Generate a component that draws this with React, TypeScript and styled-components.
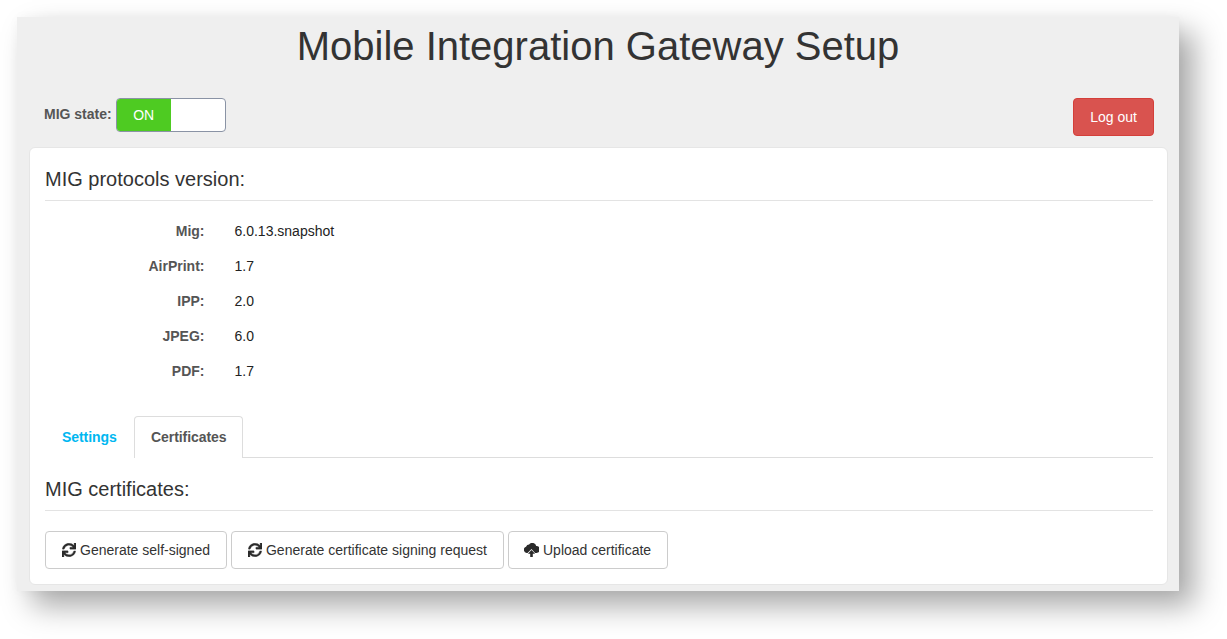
import React from "react";
import styled, { createGlobalStyle } from "styled-components";
import { FaSync } from "react-icons/fa";

const Global = createGlobalStyle`
  html, body { margin: 0; padding: 0; background: #fff; }
  body { font-family: "Liberation Sans", Arial, sans-serif; font-size: 14px; color: #333; overflow: hidden; }
`;

const Stage = styled.div`
  width: 1227px;
  height: 639px;
  box-sizing: border-box;
  padding: 17px 48px 48px 17px;
  overflow: hidden;
`;

const Window = styled.div`
  height: 574px;
  box-sizing: border-box;
  background: #efefef;
  padding: 0 11px 6px 12px;
  box-shadow: 15px 15px 28px rgba(0, 0, 0, 0.34), 0 0 10px rgba(0, 0, 0, 0.03);
  display: flex;
  flex-direction: column;
`;

const Title = styled.h1`
  margin: 0;
  height: 81px;
  padding: 5px 1px 0 0;
  box-sizing: border-box;
  text-align: center;
  font-size: 40px;
  line-height: 48px;
  font-weight: 400;
  color: #333;
`;

const TopBar = styled.div`
  height: 50px;
  box-sizing: border-box;
  padding: 1px 14px 0 15px;
  display: flex;
  justify-content: space-between;
  align-items: flex-start;
`;

const StateGroup = styled.div`
  display: flex;
  align-items: center;
  gap: 4px;
`;

const StateLabel = styled.span`
  font-weight: 700;
  font-size: 14px;
  color: #555;
  margin-top: -2px;
`;

const Toggle = styled.div`
  width: 110px;
  height: 34px;
  box-sizing: border-box;
  border: 1px solid #8a93a5;
  border-radius: 4px;
  background: #fff;
  overflow: hidden;
  display: flex;
`;

const ToggleOn = styled.div`
  width: 54px;
  background: #4ecb22;
  color: #fff;
  font-size: 14px;
  display: flex;
  align-items: center;
  justify-content: center;
`;

const LogoutButton = styled.button`
  width: 81px;
  height: 38px;
  box-sizing: border-box;
  border: 1px solid #d43f3a;
  border-radius: 4px;
  background: #d9534f;
  color: #fff;
  font: 14px "Liberation Sans", Arial, sans-serif;
  padding: 0;
`;

const Panel = styled.div`
  flex: 1;
  box-sizing: border-box;
  background: #fff;
  border: 1px solid #e6e6e6;
  border-radius: 6px;
  padding: 15px 14px 15px 15px;
  display: flex;
  flex-direction: column;
`;

const SectionTitle = styled.h3`
  margin: 0;
  font-size: 20px;
  line-height: 32px;
  height: 37px;
  font-weight: 400;
  color: #333;
  border-bottom: 1px solid #e3e3e3;
`;

const Versions = styled.dl`
  margin: 12px 0 0;
  display: grid;
  grid-template-columns: 159.5px 1fr;
  column-gap: 30px;
  grid-auto-rows: 35px;
  align-items: center;
`;

const VersionKey = styled.dt`
  font-weight: 700;
  color: #555;
  text-align: right;
`;

const VersionValue = styled.dd`
  margin: 0;
  color: #222;
`;

const Tabs = styled.div`
  margin-top: 28px;
  margin-bottom: 15px;
  height: 42px;
  box-sizing: border-box;
  display: flex;
  border-bottom: 1px solid #ddd;
`;

const Tab = styled.div<{ $active?: boolean }>`
  height: 42px;
  box-sizing: border-box;
  padding: 0 16px 2px;
  margin-right: 0.5px;
  display: flex;
  align-items: center;
  font-weight: 700;
  letter-spacing: -0.08px;
  color: ${(p) => (p.$active ? "#555" : "#00b7f1")};
  background: #fff;
  border: 1px solid ${(p) => (p.$active ? "#ddd" : "transparent")};
  border-bottom: 0;
  border-radius: 4px 4px 0 0;
`;

const Actions = styled.div`
  margin-top: 20px;
  display: flex;
  gap: 4px;
`;

const ActionButton = styled.button`
  height: 38px;
  box-sizing: border-box;
  padding: 0 16px;
  border: 1px solid #ccc;
  border-radius: 4px;
  background: #fff;
  color: #333;
  font: 14px "Liberation Sans", Arial, sans-serif;
  display: flex;
  align-items: center;
  gap: 4px;
`;

const RefreshIcon = styled(FaSync)`
  width: 14px;
  height: 14px;
  stroke: currentColor;
  stroke-width: 12px;
  color: #2a2a2a;
  margin-top: -1px;
`;

const CloudSvg = styled.svg`
  width: 15px;
  height: 14px;
  margin-left: -1px;
  fill: #2a2a2a;
`;

const CloudIcon = () => (
  <CloudSvg viewBox="1 1 13 13">
    <path d="M3.4 10.2H3a3 3 0 0 1-.6-5.8A3.3 3.3 0 0 1 5.3 2.4 3.7 3.7 0 0 1 11.9 3.8a3.2 3.2 0 0 1 .3 6.4h-1.4L7.5 6.6 3.8 10.2z" />
    <path d="M7.5 7.6 10.8 11H8.7v3H6.3v-3H4.2z" />
  </CloudSvg>
);

const versions: [string, string][] = [
  ["Mig:", "6.0.13.snapshot"],
  ["AirPrint:", "1.7"],
  ["IPP:", "2.0"],
  ["JPEG:", "6.0"],
  ["PDF:", "1.7"],
];

export default function App() {
  return (
    <>
      <Global />
      <Stage>
        <Window>
          <Title>Mobile Integration Gateway Setup</Title>
          <TopBar>
            <StateGroup>
              <StateLabel>MIG state:</StateLabel>
              <Toggle>
                <ToggleOn>ON</ToggleOn>
              </Toggle>
            </StateGroup>
            <LogoutButton>Log out</LogoutButton>
          </TopBar>
          <Panel>
            <SectionTitle>MIG protocols version:</SectionTitle>
            <Versions>
              {versions.map(([k, v]) => (
                <React.Fragment key={k}>
                  <VersionKey>{k}</VersionKey>
                  <VersionValue>{v}</VersionValue>
                </React.Fragment>
              ))}
            </Versions>
            <Tabs>
              <Tab>Settings</Tab>
              <Tab $active>Certificates</Tab>
            </Tabs>
            <SectionTitle>MIG certificates:</SectionTitle>
            <Actions>
              <ActionButton><RefreshIcon />Generate self-signed</ActionButton>
              <ActionButton><RefreshIcon />Generate certificate signing request</ActionButton>
              <ActionButton><CloudIcon />Upload certificate</ActionButton>
            </Actions>
          </Panel>
        </Window>
      </Stage>
    </>
  );
}
